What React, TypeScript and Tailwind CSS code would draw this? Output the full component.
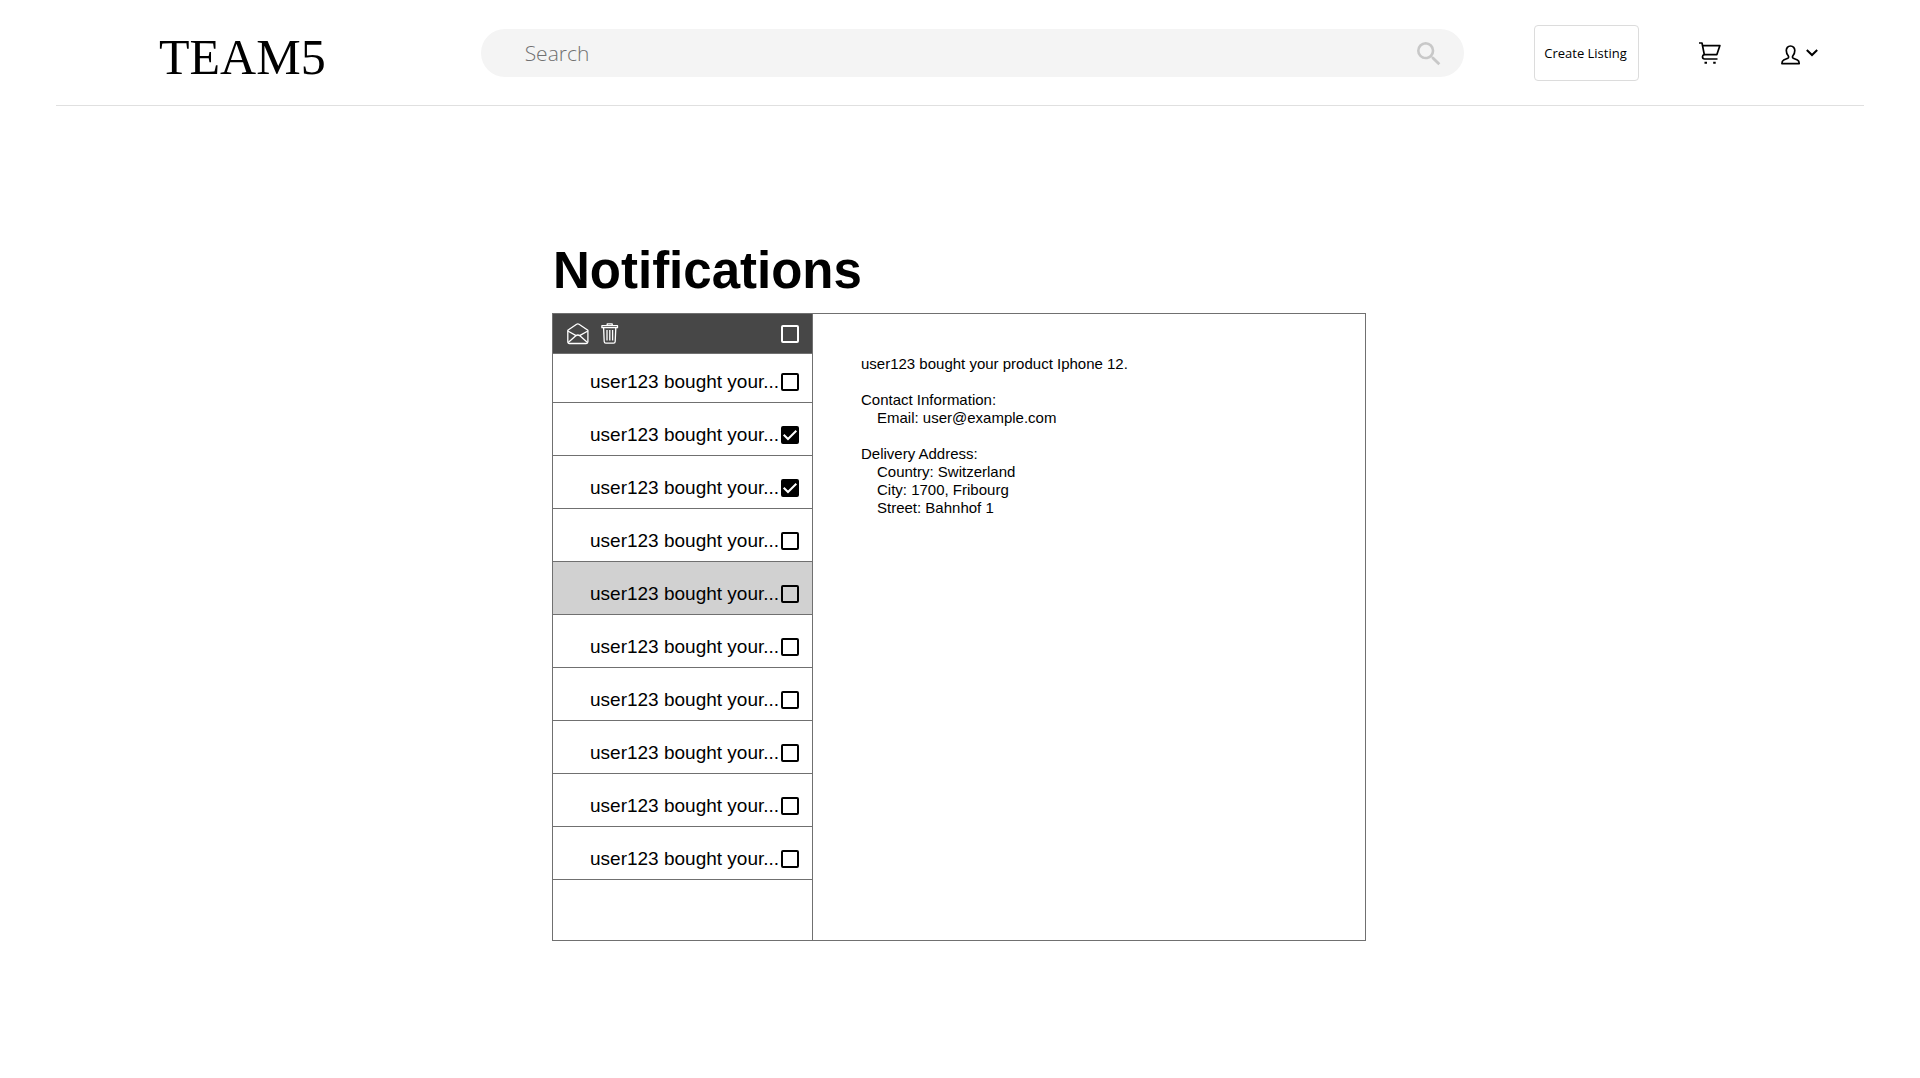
import { useState } from "react";
import { MdSearch } from "react-icons/md";

const PREVIEW = "user123 bought your...";
const SELECTED = 4;

function CartIcon() {
  return (
    <svg width="22" height="22" viewBox="0 0 22 22" fill="none" stroke="#000" strokeWidth="1.7" strokeLinejoin="round">
      <path d="M0 1h3l2.3 11.6h12.6L20.9 3.6H3.6" />
      <path d="M5.3 12.6c-1.300.2-1.800 1-1.800 2.200s.8 2.200 2 2.200h13" />
      <path d="M5.500 20.700h2.500M14.200 20.700h2.500" strokeWidth="2" />
    </svg>
  );
}

function UserIcon() {
  return (
    <svg className="mt-1" width="20" height="20" viewBox="0 0 20 20" fill="none" stroke="#000" strokeWidth="1.700" strokeLinejoin="round">
      <path d="M9.500 1C6.800 1 5.300 3 5.300 5.600c0 2.300.8 3.900 1.900 5.100.6.8.6 2-.4 2.500L2.700 15C1.400 15.600.9 16.600.9 18.600h17.300c0-2-.5-3-1.800-3.600l-4.100-1.800c-1-.5-1-1.700-.4-2.500 1.100-1.200 1.900-2.800 1.900-5.100C13.800 3 12.200 1 9.500 1z" />
    </svg>
  );
}

function ChevronIcon() {
  return (
    <svg width="12" height="8" viewBox="0 0 12 8" fill="none" stroke="#000" strokeWidth="2">
      <path d="M.8 1l5.200 5 5.200-5" />
    </svg>
  );
}

function MailOpenIcon() {
  return (
    <svg width="22" height="22" viewBox="0 0 22 22" fill="none" stroke="#fff" strokeWidth="1.300" strokeLinejoin="round">
      <path d="M.8 7.200 9.600 1.200q1.200-.7 2.400 0l8.900 6v11.600q0 1.700-1.700 1.700H2.500Q.8 20.500.8 18.800z" />
      <path d="M.8 8l8.300 4.600M20.900 8l-8.300 4.600M1.200 19.600l7.900-7q1.800-1.200 3.500 0l7.900 7" />
    </svg>
  );
}

function TrashIcon() {
  return (
    <svg width="18" height="21" viewBox="0 0 18 21" fill="none" stroke="#fff" strokeWidth="1.300" strokeLinejoin="round">
      <path d="M.9 2.700h15.600v2H.9zM6.200 2.500V.9h5v1.600" />
      <path d="M2.600 4.900l.6 13.600q.1 1.600 1.600 1.600h7.800q1.500 0 1.600-1.600l.6-13.600" />
      <path d="M6 7v10.500M8.800 7v10.500M11.600 7v10.500" />
    </svg>
  );
}

function CheckBox({
  label,
  checked,
  onChange,
  light = false,
}: {
  label: string;
  checked: boolean;
  onChange: (value: boolean) => void;
  light?: boolean;
}) {
  return (
    <span className="grid size-[18px] shrink-0">
      <input
        type="checkbox"
        aria-label={label}
        checked={checked}
        onChange={(e) => onChange(e.target.checked)}
        className={
          light
            ? "col-start-1 row-start-1 size-[18px] appearance-none rounded-[2px] border-2 border-white"
            : "col-start-1 row-start-1 size-[18px] appearance-none rounded-[2px] border-2 border-black checked:bg-black"
        }
      />
      {checked && (
        <svg
          className="pointer-events-none col-start-1 row-start-1"
          width="18"
          height="18"
          viewBox="0 0 18 18"
          fill="none"
          stroke="#fff"
          strokeWidth="2"
        >
          <path d="M2.700 8.700l4.300 4.300 8.300-8.300" />
        </svg>
      )}
    </span>
  );
}

export default function App() {
  const [checks, setChecks] = useState<boolean[]>(Array.from({ length: 10 }, (_, i) => i === 1 || i === 2));
  const [active, setActive] = useState(SELECTED);
  const all = checks.every(Boolean);

  return (
    <div className="bg-white font-['Liberation_Sans',Arial,sans-serif] text-black">
      <header className="mx-14 flex items-center border-b border-[#e0e0e0] pt-[25px] pr-[46px] pb-6 pl-[103px]">
        <a href="#" className="pt-2 font-['Liberation_Serif',serif] text-[50px] leading-[48px]">
          TEAM5
        </a>
        <form role="search" className="ml-[155px] flex h-12 flex-1 items-center rounded-full bg-[#f4f4f4] pt-0.5 pr-[19px] pl-11">
          <input
            type="search"
            aria-label="Search"
            placeholder="Search"
            className="min-w-0 flex-1 bg-transparent font-['Open_Sans',sans-serif] text-[21px] font-light outline-none placeholder:text-[#707070]"
          />
          <button type="button" aria-label="Submit search" className="text-[#c8c8c8]">
            <MdSearch size={32} />
          </button>
        </form>
        <button
          type="button"
          className="ml-[70px] h-14 w-[105px] rounded border border-[#dcdcdc] pt-0.5 pr-0.5 font-['Open_Sans',sans-serif] text-[13px] whitespace-nowrap"
        >
          Create Listing
        </button>
        <button type="button" aria-label="Cart" className="ml-[60px]">
          <CartIcon />
        </button>
        <button type="button" aria-label="Account" className="ml-[60px] flex items-center gap-[5px]">
          <UserIcon />
          <ChevronIcon />
        </button>
      </header>

      <main className="mx-auto w-full max-w-[816px] pt-[134px] pr-0.5 pb-12">
        <h1 className="mb-3 pl-px text-[51px] leading-[61px] font-bold">Notifications</h1>
        <div className="flex border border-[#707070]">
          <section aria-label="Inbox" className="w-[260px] shrink-0 border-r border-[#707070] pb-[60px]">
            <div className="flex h-10 items-center border-b border-[#707070] bg-[#474747] pr-[13px] pl-[14px]">
              <button type="button" aria-label="Mark as read">
                <MailOpenIcon />
              </button>
              <button type="button" aria-label="Delete" className="mr-auto ml-3">
                <TrashIcon />
              </button>
              <CheckBox light label="Select all" checked={all} onChange={(v) => setChecks(checks.map(() => v))} />
            </div>
            <ul>
              {checks.map((checked, i) => (
                <li
                  key={i}
                  className={
                    "flex h-[53px] items-end border-b border-[#707070] pr-[13px] pb-[11px] pl-[37px] first:h-[49px]" +
                    (i === active ? " bg-[#d1d1d1]" : "")
                  }
                >
                  <button
                    type="button"
                    onClick={() => setActive(i)}
                    className="min-w-0 flex-1 text-left text-[19px] leading-[18px] whitespace-nowrap"
                  >
                    {PREVIEW}
                  </button>
                  <CheckBox
                    label={`Select notification ${i + 1}`}
                    checked={checked}
                    onChange={(v) => setChecks(checks.map((c, j) => (j === i ? v : c)))}
                  />
                </li>
              ))}
            </ul>
          </section>
          <article className="flex-1 pt-[41px] pb-10 pl-12 text-[15px] leading-[18px]">
            <p>user123 bought your product Iphone 12.</p>
            <p className="mt-[18px]">Contact Information:</p>
            <p className="pl-4">Email: user@example.com</p>
            <p className="mt-[18px]">Delivery Address:</p>
            <p className="pl-4">Country: Switzerland</p>
            <p className="pl-4">City: 1700, Fribourg</p>
            <p className="pl-4">Street: Bahnhof 1</p>
          </article>
        </div>
      </main>
    </div>
  );
}
